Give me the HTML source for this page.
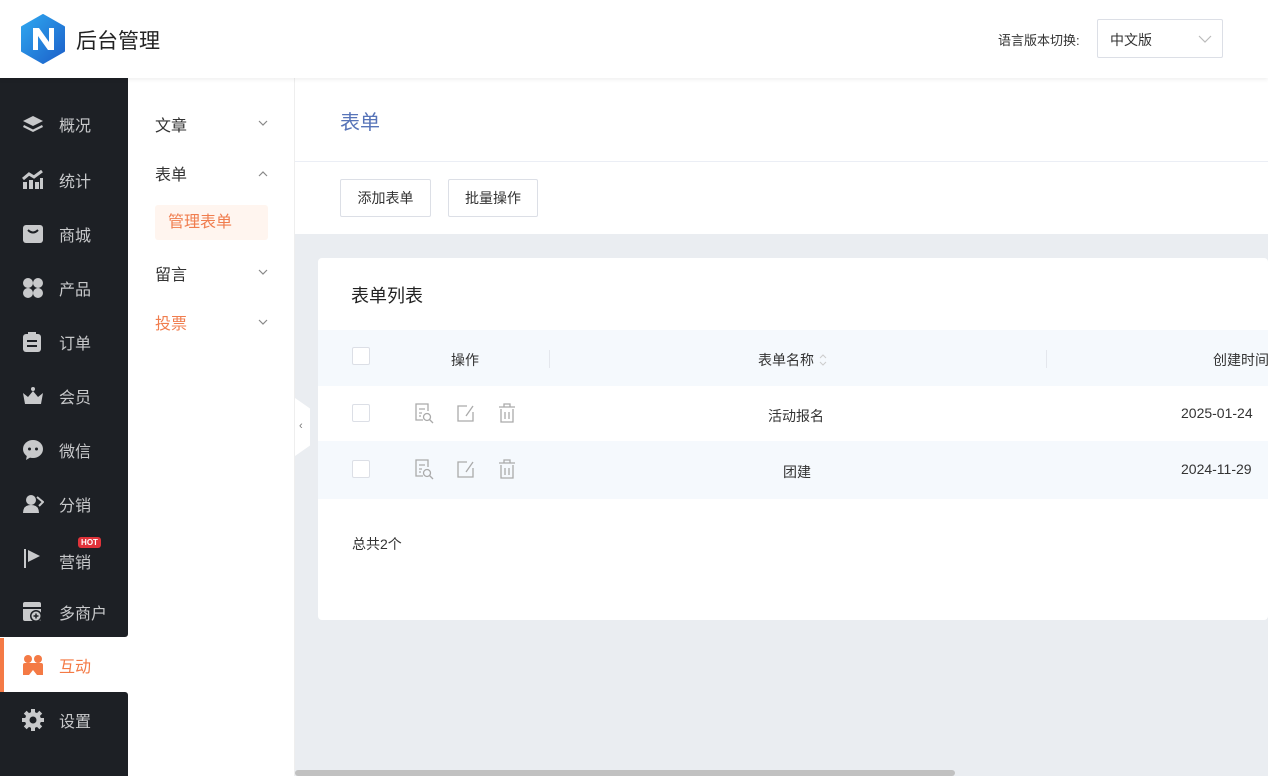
<!DOCTYPE html>
<html><head><meta charset="utf-8"><style>
*{margin:0;padding:0;box-sizing:border-box}
body{width:1268px;height:776px;overflow:hidden;position:relative;background:#fff;font-family:"Liberation Sans","Noto Sans CJK SC",sans-serif;color:#333}
.hdr{position:absolute;left:0;top:0;width:1268px;height:78px;background:#fff;box-shadow:0 2px 4px rgba(0,0,0,.06);z-index:3}
.abs{position:absolute}
.side{position:absolute;left:0;top:78px;width:128px;height:698px}
.dk1{position:absolute;left:0;top:0;width:128px;height:559px;background:#1d2025;border-bottom-right-radius:3px}
.dk2{position:absolute;left:0;top:614px;width:128px;height:84px;background:#1d2025;border-top-right-radius:3px}
.it{position:absolute;left:0;width:128px;height:54px;display:flex;align-items:center;color:#c8c9cb;font-size:16px}
.it svg{position:absolute;left:22px}
.it span{position:absolute;left:59px}
.sub{position:absolute;left:128px;top:78px;width:167px;height:698px;background:#fff;border-right:1px solid #eee}
.si{position:absolute;left:27px;font-size:16px;color:#333}
.chev{position:absolute;left:130px}
.main{position:absolute;left:295px;top:78px;width:973px;height:698px;background:#eaedf1}
.btn{position:absolute;top:101px;height:38px;border:1px solid #dcdfe6;border-radius:2px;font-size:14px;line-height:36px;text-align:center;color:#333;background:#fff}
.cb{position:absolute;left:34px;width:18px;height:18px;border:1px solid #dcdfe6;background:#fff;border-radius:2px}
</style></head><body>
<div class="hdr">
 <svg class="abs" style="left:20px;top:14px" width="46" height="50" viewBox="0 0 46 50"><defs><linearGradient id="g" x1="0" y1="0" x2="1" y2="1"><stop offset="0" stop-color="#2fa8f0"/><stop offset="1" stop-color="#1c5fc9"/></linearGradient></defs><path d="M23 1 L44 13 L44 37 L23 49 L2 37 L2 13 Z" fill="url(#g)" stroke="url(#g)" stroke-width="2" stroke-linejoin="round"/><path d="M13 36 V14 H19 L29 28 V14 H34 V36 H28 L18 22 V36 Z" fill="#fff"/></svg>
 <div class="abs" style="left:76px;top:25px;font-size:21px;color:#222">后台管理</div>
 <div class="abs" style="left:998px;top:30px;font-size:13px;color:#333">语言版本切换:</div>
 <div class="abs" style="left:1097px;top:19px;width:126px;height:39px;border:1px solid #dcdfe6;border-radius:2px"><span class="abs" style="left:12px;top:10px;font-size:14px">中文版</span><svg class="abs" style="left:100px;top:15px" width="14" height="8"><path d="M1 1 L7 7 L13 1" fill="none" stroke="#bbb" stroke-width="1.2"/></svg></div>
</div>
<div class="side">
 <div class="dk1"></div><div class="dk2"></div>
 <div class="abs" style="left:0;top:560px;width:4px;height:54px;background:#f47a45"></div>
 <div class="it" style="top:19px"><svg width="22" height="18" viewBox="0 0 22 18"><path d="M11 1 L21 6 L11 11 L1 6Z" fill="#c8c9cb"/><path d="M2 10 L11 14.5 L20 10 L21 12 L11 17 L1 12Z" fill="#c8c9cb"/></svg><span>概况</span></div>
 <div class="it" style="top:75px"><svg width="22" height="20" viewBox="0 0 22 20"><path d="M1 9 L7 4 L12 7 L20 1" fill="none" stroke="#c8c9cb" stroke-width="3"/><rect x="1" y="12" width="4" height="7" fill="#c8c9cb"/><rect x="7" y="10" width="4" height="9" fill="#c8c9cb"/><rect x="13" y="12" width="4" height="7" fill="#c8c9cb"/><rect x="18" y="8" width="3" height="11" fill="#c8c9cb"/></svg><span>统计</span></div>
 <div class="it" style="top:129px"><svg width="22" height="20" viewBox="0 0 22 20"><rect x="1" y="1" width="20" height="18" rx="3" fill="#c8c9cb"/><path d="M6 6 Q11 11 16 6" fill="none" stroke="#1d2025" stroke-width="2"/></svg><span>商城</span></div>
 <div class="it" style="top:183px"><svg width="22" height="22" viewBox="0 0 22 22"><circle cx="6" cy="6" r="5" fill="#c8c9cb"/><circle cx="16" cy="6" r="5" fill="#c8c9cb"/><circle cx="6" cy="16" r="5" fill="#c8c9cb"/><circle cx="16" cy="16" r="5" fill="#c8c9cb"/></svg><span>产品</span></div>
 <div class="it" style="top:237px"><svg width="20" height="22" viewBox="0 0 20 22"><rect x="1" y="3" width="18" height="18" rx="3" fill="#c8c9cb"/><rect x="6" y="1" width="8" height="4" fill="#c8c9cb"/><rect x="5" y="9" width="10" height="2" fill="#1d2025"/><rect x="5" y="14" width="10" height="2" fill="#1d2025"/></svg><span>订单</span></div>
 <div class="it" style="top:291px"><svg width="22" height="20" viewBox="0 0 22 20"><circle cx="11" cy="3" r="2" fill="#c8c9cb"/><path d="M1 7 L6 11 L11 5 L16 11 L21 7 L19 18 H3Z" fill="#c8c9cb"/></svg><span>会员</span></div>
 <div class="it" style="top:345px"><svg width="22" height="22" viewBox="0 0 22 22"><ellipse cx="11" cy="10" rx="10" ry="9" fill="#c8c9cb"/><path d="M5 16 L4 21 L9 18Z" fill="#c8c9cb"/><circle cx="7.5" cy="10" r="1.5" fill="#1d2025"/><circle cx="14.5" cy="10" r="1.5" fill="#1d2025"/></svg><span>微信</span></div>
 <div class="it" style="top:399px"><svg width="22" height="20" viewBox="0 0 22 20"><circle cx="9" cy="6" r="5" fill="#c8c9cb"/><path d="M1 19 Q1 11 9 11 Q17 11 17 19Z" fill="#c8c9cb"/><path d="M15 3 L21 8 L17 12" fill="none" stroke="#c8c9cb" stroke-width="2"/></svg><span>分销</span></div>
 <div class="it" style="top:453px"><svg width="20" height="22" viewBox="0 0 20 22"><rect x="2" y="2" width="2" height="19" fill="#c8c9cb"/><path d="M6 3 L18 9 L6 15Z" fill="#c8c9cb"/></svg><span style="top:18px">营销</span><div class="abs" style="left:78px;top:6px;width:23px;height:11px;background:#e0333a;border-radius:3px;color:#fff;font-size:8px;line-height:11px;text-align:center;font-weight:bold">HOT</div></div>
 <div class="it" style="top:507px"><svg width="22" height="22" viewBox="0 0 22 22"><rect x="1" y="1" width="18" height="19" rx="2" fill="#c8c9cb"/><rect x="1" y="6" width="18" height="2" fill="#1d2025"/><circle cx="14" cy="15" r="6" fill="#1d2025"/><circle cx="14" cy="15" r="4.5" fill="#c8c9cb"/><path d="M11.5 15 H16.5 M14 12.5 V17.5" stroke="#1d2025" stroke-width="1.5"/></svg><span>多商户</span></div>
 <div class="it" style="top:560px;color:#f47a45"><svg width="22" height="22" viewBox="0 0 22 22"><circle cx="6" cy="5" r="4" fill="#f47a45"/><circle cx="16" cy="5" r="4" fill="#f47a45"/><path d="M1 21 V11 Q1 9 3 9 H19 Q21 9 21 11 V21 H15 L11 16 L7 21Z" fill="#f47a45"/></svg><span>互动</span></div>
 <div class="it" style="top:615px"><svg width="22" height="22" viewBox="0 0 22 22"><g fill="#c8c9cb"><circle cx="11" cy="11" r="8"/><rect x="9" y="0" width="4" height="22"/><rect x="0" y="9" width="22" height="4"/><rect x="9" y="0" width="4" height="22" transform="rotate(45 11 11)"/><rect x="9" y="0" width="4" height="22" transform="rotate(-45 11 11)"/></g><circle cx="11" cy="11" r="3.5" fill="#1d2025"/></svg><span>设置</span></div>
</div>
<div class="sub">
 <div class="si" style="top:34px">文章</div><svg class="chev" style="top:42px" width="10" height="6"><path d="M1 1 L5 5 L9 1" fill="none" stroke="#888" stroke-width="1.2"/></svg>
 <div class="si" style="top:83px">表单</div><svg class="chev" style="top:93px" width="10" height="6"><path d="M1 5 L5 1 L9 5" fill="none" stroke="#888" stroke-width="1.2"/></svg>
 <div class="abs" style="left:27px;top:127px;width:113px;height:35px;background:#fff5ef;border-radius:3px;color:#f07d4e;font-size:16px;line-height:35px;padding-left:13px">管理表单</div>
 <div class="si" style="top:183px">留言</div><svg class="chev" style="top:191px" width="10" height="6"><path d="M1 1 L5 5 L9 1" fill="none" stroke="#888" stroke-width="1.2"/></svg>
 <div class="si" style="top:232px;color:#f07d4e">投票</div><svg class="chev" style="top:241px" width="10" height="6"><path d="M1 1 L5 5 L9 1" fill="none" stroke="#888" stroke-width="1.2"/></svg>
</div>
<div class="abs" style="left:295px;top:398px;width:15px;height:58px;background:#fff;clip-path:polygon(0 0,100% 18%,100% 82%,0 100%);z-index:2"></div>
<div class="abs" style="left:299px;top:420px;font-size:11px;color:#777;z-index:2">‹</div>
<div class="main">
 <div class="abs" style="left:0;top:0;width:973px;height:156px;background:#fff"></div>
 <div class="abs" style="left:0;top:83px;width:973px;height:1px;background:#ebeef5"></div>
 <div class="abs" style="left:45px;top:28px;font-size:20px;color:#5774b8">表单</div>
 <div class="btn" style="left:45px;width:91px">添加表单</div>
 <div class="btn" style="left:153px;width:90px">批量操作</div>
 <div class="abs" style="left:23px;top:180px;width:950px;height:362px;background:#fff;border-radius:4px">
  <div class="abs" style="left:33px;top:24px;font-size:18px;color:#222">表单列表</div>
  <div class="abs" style="left:0;top:72px;width:950px;height:56px;background:#f5f9fd"></div>
  <div class="abs" style="left:0;top:183px;width:950px;height:58px;background:#f5f9fd"></div>
  <div class="cb" style="top:89px"></div><div class="cb" style="top:146px"></div><div class="cb" style="top:202px"></div>
  <div class="abs" style="left:133px;top:92px;font-size:14px">操作</div>
  <div class="abs" style="left:231px;top:92px;width:1px;height:18px;background:#e4e7ed"></div>
  <div class="abs" style="left:440px;top:92px;font-size:14px">表单名称 <svg width="10" height="14" style="vertical-align:-2px"><path d="M2 5 L5 2 L8 5 M2 9 L5 12 L8 9" fill="none" stroke="#ccc" stroke-width="1"/></svg></div>
  <div class="abs" style="left:728px;top:92px;width:1px;height:18px;background:#e4e7ed"></div>
  <div class="abs" style="left:895px;top:92px;font-size:14px;white-space:nowrap">创建时间</div>
  <div class="abs" style="left:450px;top:148px;font-size:14px">活动报名</div>
  <div class="abs" style="left:465px;top:204px;font-size:14px">团建</div>
  <div class="abs" style="left:863px;top:147px;font-size:14px;white-space:nowrap">2025-01-24</div>
  <div class="abs" style="left:863px;top:203px;font-size:14px;white-space:nowrap">2024-11-29</div>
  <svg class="abs" style="left:96px;top:145px" width="110" height="78" viewBox="0 0 110 78" fill="none" stroke="#aaa" stroke-width="1.3">
   <g id="r"><path d="M9 17 H2 V1 H14 V8"/><path d="M5 6 H11 M5 10 H8 M5 13 H7"/><circle cx="13" cy="14" r="3.5"/><path d="M15.5 16.5 L19 20"/>
   <path d="M53 3 H44 V18 H59 V9"/><path d="M52 13 L59 3"/>
   <path d="M85 4 H101 M90 4 V1 H96 V4 M87 6 V19 H99 V6 M91 9 V16 M95 9 V16"/></g>
   <use href="#r" y="56"/>
  </svg>
  <div class="abs" style="left:34px;top:276px;font-size:14px">总共2个</div>
 </div>
 <div class="abs" style="left:0;top:692px;width:660px;height:6px;background:#c1c1c1;border-radius:3px"></div>
</div>
</body></html>
